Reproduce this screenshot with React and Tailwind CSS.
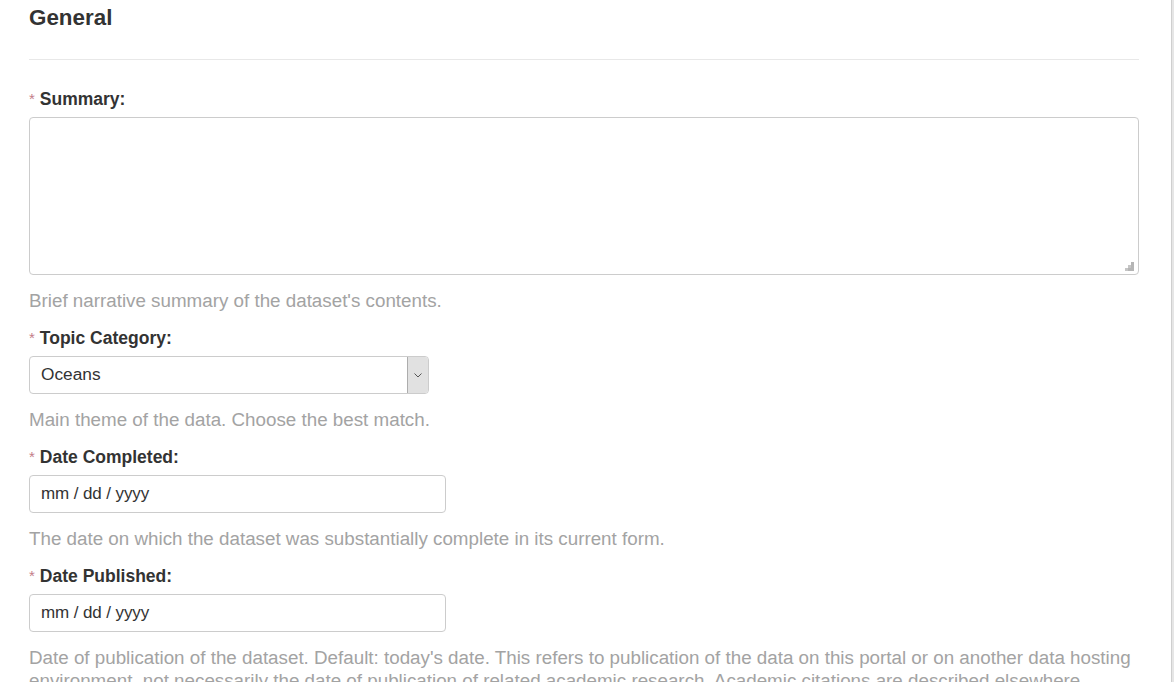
import React from "react";

function Label({ children }) {
  return (
    <div className="leading-[24px] text-[17.5px] font-bold text-[#333333] mb-[6px]">
      <span className="text-[#c47d88] font-normal text-[15px] mr-[5px] align-[1px]">*</span>
      {children}
    </div>
  );
}

function Help({ children }) {
  return (
    <div className="mt-[13.5px] mb-[14.5px] text-[18.8px] leading-[23px] text-[#a3a3a3]">
      {children}
    </div>
  );
}

export default function App() {
  return (
    <div
      className="flex w-full h-[682px] overflow-hidden bg-white"
      style={{ fontFamily: '"Liberation Sans", Arial, sans-serif' }}
    >
      <div className="flex-1 pl-[29px] pr-[32px]">
        <h2 className="text-[22.4px] font-bold text-[#333333] leading-[24px] pt-[6px]">General</h2>
        <div className="mt-[29px] border-t border-[#e8e8e8] mb-[27px]" />

        <Label>Summary:</Label>
        <div className="relative mt-[1px] h-[158px] border border-[#cccccc] rounded-[4px] bg-white">
          <svg className="absolute right-[4px] bottom-[3px]" width="9" height="9" viewBox="0 0 9 9">
            <rect x="6" y="0" width="3" height="3" fill="#b5b5b5" />
            <rect x="3" y="3" width="3" height="3" fill="#c5c5c5" />
            <rect x="6" y="3" width="3" height="3" fill="#b5b5b5" />
            <rect x="0" y="6" width="3" height="3" fill="#c5c5c5" />
            <rect x="3" y="6" width="3" height="3" fill="#b5b5b5" />
            <rect x="6" y="6" width="3" height="3" fill="#b5b5b5" />
          </svg>
        </div>
        <Help>Brief narrative summary of the dataset's contents.</Help>

        <Label>Topic Category:</Label>
        <div className="flex w-[400px] h-[38px] border border-[#cccccc] rounded-[4px] bg-white overflow-hidden">
          <div className="flex-1 flex items-center pl-[11px] text-[17.3px] text-[#333333]">Oceans</div>
          <div className="w-[21px] flex items-center justify-center bg-[#e1e1e1] border-l border-[#adadad]">
            <svg width="8" height="5" viewBox="0 0 8 5">
              <path d="M0.5 0.5 L4 4 L7.5 0.5" fill="none" stroke="#555555" strokeWidth="1" />
            </svg>
          </div>
        </div>
        <Help>Main theme of the data. Choose the best match.</Help>

        <Label>Date Completed:</Label>
        <div className="flex items-center w-[417px] h-[38px] border border-[#cccccc] rounded-[4px] bg-white pl-[11px] text-[17px] text-[#333333] tracking-[-0.1px]">
          mm / dd / yyyy
        </div>
        <Help>The date on which the dataset was substantially complete in its current form.</Help>

        <Label>Date Published:</Label>
        <div className="flex items-center w-[417px] h-[38px] border border-[#cccccc] rounded-[4px] bg-white pl-[11px] text-[17px] text-[#333333] tracking-[-0.1px]">
          mm / dd / yyyy
        </div>
        <Help>
          Date of publication of the dataset. Default: today's date. This refers to publication of the data on this portal or on another data hosting environment, not necessarily the date of publication of related academic research. Academic citations are described elsewhere.
        </Help>
      </div>
      <div className="w-[3px] border-l border-[#cfcfcf] bg-[#e6e6e6]" />
    </div>
  );
}
